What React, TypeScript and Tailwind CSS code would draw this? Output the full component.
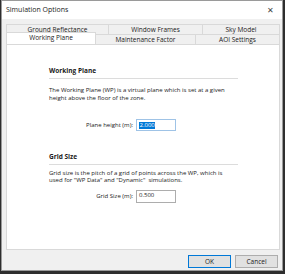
import React from "react"

const Tab = ({ label, active, className }: { label: string; active?: boolean; className: string }) => (
  <div
    className={
      "flex items-center justify-center border-r border-t border-l border-[#d9d9d9] text-[6.5px] text-[#1a1a1a] " +
      (active ? "bg-white relative z-10 -mt-[1px] h-[12px] pb-[2px] " : "bg-[#f0f0f0] h-[10px] ") +
      className
    }
  >
    {label}
  </div>
)

export default function App() {
  return (
    <div
      className="w-[285px] h-[274px] bg-[#2e2e2e] pl-[1px] pr-[2px] pb-[3px] overflow-hidden"
      style={{ fontFamily: '"Open Sans", "Noto Sans", sans-serif' }}
    >
      <div className="w-full h-full bg-[#f0f0f0] border border-[#9a9a9a] flex flex-col">
        {/* title bar */}
        <div className="h-[18px] bg-white flex items-center justify-between pl-[4px] pr-[8px]">
          <span className="text-[7px] text-[#1a1a1a]">Simulation Options</span>
          <span className="text-[8px] text-[#444]">✕</span>
        </div>

        {/* tabs */}
        <div className="px-[4px] pt-[5px]">
          <div className="flex w-[274px]">
            <Tab label="Ground Reflectance" className="w-[103px]" />
            <Tab label="Window Frames" className="w-[94px] border-l-0" />
            <Tab label="Sky Model" className="w-[77px] border-l-0" />
          </div>
          <div className="flex w-[274px] items-end h-[10px]">
            <Tab label="Working Plane" active className="w-[90px]" />
            <Tab label="Maintenance Factor" className="w-[100px] border-l-0" />
            <Tab label="AOI Settings" className="w-[84px] border-l-0" />
          </div>
        </div>

        {/* panel */}
        <div className="mx-[4px] w-[274px] h-[206px] bg-white border border-[#d9d9d9] pl-[42px] pt-[22px] text-[#1a1a1a]">
          <div className="w-[189px]">
            <div className="text-[6.5px] font-bold leading-[8px]">Working Plane</div>
            <div className="mt-[3px] h-px bg-[#dcdcdc]" />
            <p className="mt-[8px] text-[6px] leading-[7.5px] w-[190px]">
              The Working Plane (WP) is a virtual plane which is set at a given height above the floor of the zone.
            </p>
            <div className="mt-[17px] flex items-center">
              <span className="w-[87px] text-right text-[6px] pr-[3px]">Plane height (m):</span>
              <div className="w-[40px] h-[12px] border border-[#9fc3e6] flex items-center pl-[2px]">
                <span className="bg-[#0078d7] text-white text-[6px] leading-[7px] px-[0.5px]">2.000</span>
              </div>
            </div>

            <div className="mt-[22px] text-[6.5px] font-bold leading-[8px]">Grid Size</div>
            <div className="mt-[3px] h-px bg-[#dcdcdc]" />
            <p className="mt-[5px] text-[6px] leading-[7px] w-[182px]">
              Grid size is the pitch of a grid of points across the WP, which is used for "WP Data" and "Dynamic"&nbsp; simulations.
            </p>
            <div className="mt-[6px] flex items-center">
              <span className="w-[87px] text-right text-[6px] pr-[3px]">Grid Size (m):</span>
              <div className="w-[40px] h-[13px] border border-[#adadad] flex items-start pl-[2px] pt-[1px]">
                <span className="text-[6px] leading-[7px]">0.500</span>
              </div>
            </div>
          </div>
        </div>

        {/* buttons */}
        <div className="flex justify-end gap-[4px] pr-[4px] pt-[5px]">
          <button className="w-[43px] h-[13px] bg-[#e1e1e1] border border-[#0078d7] text-[6.5px] text-[#1a1a1a]">OK</button>
          <button className="w-[43px] h-[13px] bg-[#e1e1e1] border border-[#adadad] text-[6.5px] text-[#1a1a1a]">Cancel</button>
        </div>
      </div>
    </div>
  )
}
